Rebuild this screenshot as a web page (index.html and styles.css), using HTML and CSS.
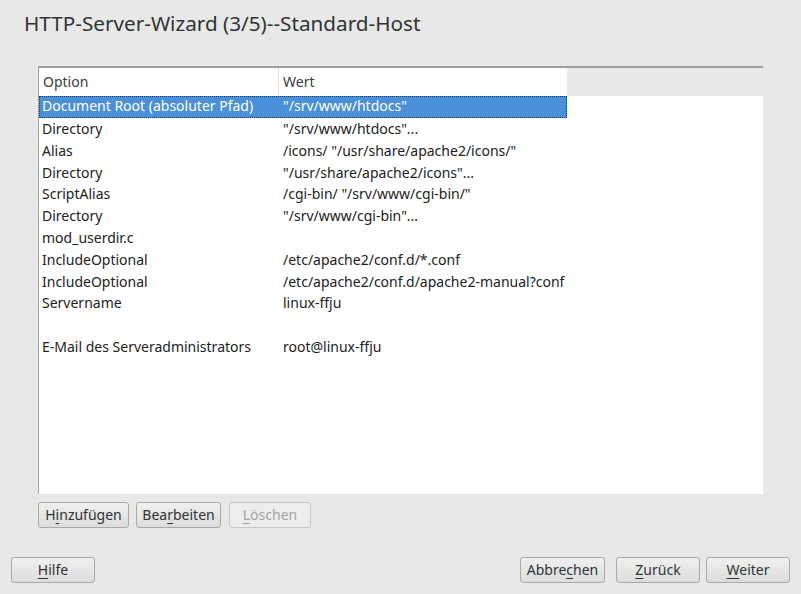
FILE: index.html
```html
<!DOCTYPE html>
<html lang="de">
<head>
<meta charset="utf-8">
<link rel="stylesheet" href="styles.css">
</head>
<body>
<div class="win">
  <h1 class="title">HTTP-Server-Wizard (3/5)--Standard-Host</h1>
  <div class="content">
    <div class="table">
      <div class="thead">
        <div class="th c1">Option</div>
        <div class="th c2">Wert</div>
        <div class="th rest"></div>
      </div>
      <div class="tbody">
        <div class="row sel"><div class="c1">Document Root (absoluter Pfad)</div><div class="c2">"/srv/www/htdocs"</div></div>
        <div class="row"><div class="c1">Directory</div><div class="c2">"/srv/www/htdocs"...</div></div>
        <div class="row"><div class="c1">Alias</div><div class="c2">/icons/ "/usr/share/apache2/icons/"</div></div>
        <div class="row"><div class="c1">Directory</div><div class="c2">"/usr/share/apache2/icons"...</div></div>
        <div class="row"><div class="c1">ScriptAlias</div><div class="c2">/cgi-bin/ "/srv/www/cgi-bin/"</div></div>
        <div class="row"><div class="c1">Directory</div><div class="c2">"/srv/www/cgi-bin"...</div></div>
        <div class="row"><div class="c1">mod_userdir.c</div><div class="c2"></div></div>
        <div class="row"><div class="c1">IncludeOptional</div><div class="c2">/etc/apache2/conf.d/*.conf</div></div>
        <div class="row"><div class="c1">IncludeOptional</div><div class="c2">/etc/apache2/conf.d/apache2-manual?conf</div></div>
        <div class="row"><div class="c1">Servername</div><div class="c2">linux-ffju</div></div>
        <div class="row"><div class="c1"></div><div class="c2"></div></div>
        <div class="row"><div class="c1">E-Mail des Serveradministrators</div><div class="c2">root@linux-ffju</div></div>
      </div>
    </div>
    <div class="actions">
      <button class="btn b-add">H<u>i</u>nzufügen</button>
      <button class="btn b-edit">Bea<u>r</u>beiten</button>
      <button class="btn b-del" disabled><u>L</u>öschen</button>
    </div>
  </div>
  <div class="footer">
    <button class="btn b-help"><u>H</u>ilfe</button>
    <div class="spacer"></div>
    <button class="btn b-cancel">Abbre<u>c</u>hen</button>
    <button class="btn b-back"><u>Z</u>urück</button>
    <button class="btn b-next"><u>W</u>eiter</button>
  </div>
</div>
</body>
</html>
```
FILE: styles.css
```css
html, body {
  margin: 0;
  padding: 0;
  background: #e8e8e7;
  font-family: "Noto Sans", "Open Sans", sans-serif;
  color: #2e3436;
}
.win {
  width: 801px;
  height: 594px;
  display: flex;
  flex-direction: column;
  box-sizing: border-box;
}
.title {
  margin: 0;
  padding: 10px 0 0 24px;
  height: 56px;
  box-sizing: border-box;
  font-size: 20.7px;
  font-weight: normal;
  line-height: 27px;
  color: #2e3436;
}
.content {
  padding: 10px 38px 0 38px;
}
.table {
  width: 725px;
  height: 428px;
  box-sizing: border-box;
  border-left: 1px solid #a6a6a6;
  border-top: 2px solid #9e9e9e;
  background: #fff;
  display: flex;
  flex-direction: column;
}
.thead {
  display: flex;
  height: 28px;
  font-size: 14px;
  line-height: 27px;
}
.th {
  background: #fff;
  color: #3c3c3c;
}
.thead .c1 {
  width: 240px;
  padding-left: 4px;
  box-sizing: border-box;
  border-right: 1px solid #e0e0e0;
}
.thead .c2 {
  width: 288px;
  padding-left: 4px;
  box-sizing: border-box;
}
.thead .rest {
  flex: 1;
  background: #e8e8e7;
}
.tbody {
  flex: 1;
}
.row {
  display: flex;
  height: 21.8px;
  line-height: 21.8px;
  font-size: 14px;
  width: 528px;
  box-sizing: border-box;
  color: #222;
}
.row .c1 {
  width: 241px;
  padding-left: 3px;
  box-sizing: border-box;
  white-space: nowrap;
}
.row .c2 {
  flex: 1;
  padding-left: 3px;
  white-space: nowrap;
}
.row.sel {
  height: 22px;
  background: #4a90d9;
  color: #fff;
  border: 1px dotted #1c3a5c;
  line-height: 18px;
}
.row.sel .c1 { padding-left: 2px; width: 240px; }
.actions {
  display: flex;
  gap: 7px;
  padding-top: 8px;
}
.btn {
  font-family: "Noto Sans", "Open Sans", sans-serif;
  font-size: 14px;
  height: 26px;
  padding: 0;
  border: 1px solid #a9a9a9;
  border-radius: 3px;
  background: linear-gradient(#f0f0ef, #dcdcdb);
  color: #2e3436;
  box-sizing: border-box;
  line-height: 22px;
}
.btn u { text-decoration-thickness: 1px; text-underline-offset: 3px; }
.btn:disabled {
  background: #ededec;
  color: #a2a4a4;
  border-color: #c8c8c8;
}
.b-add { width: 91px; }
.b-edit { width: 85px; }
.b-del { width: 82px; margin-left: 1px; }
.footer {
  margin-top: auto;
  display: flex;
  padding: 0 11px 11px 11px;
  gap: 0;
}
.spacer { flex: 1; }
.b-help { width: 84px; }
.b-cancel { width: 85px; }
.b-back { width: 84px; margin-left: 11px; }
.b-next { width: 84px; margin-left: 6px; }
```
